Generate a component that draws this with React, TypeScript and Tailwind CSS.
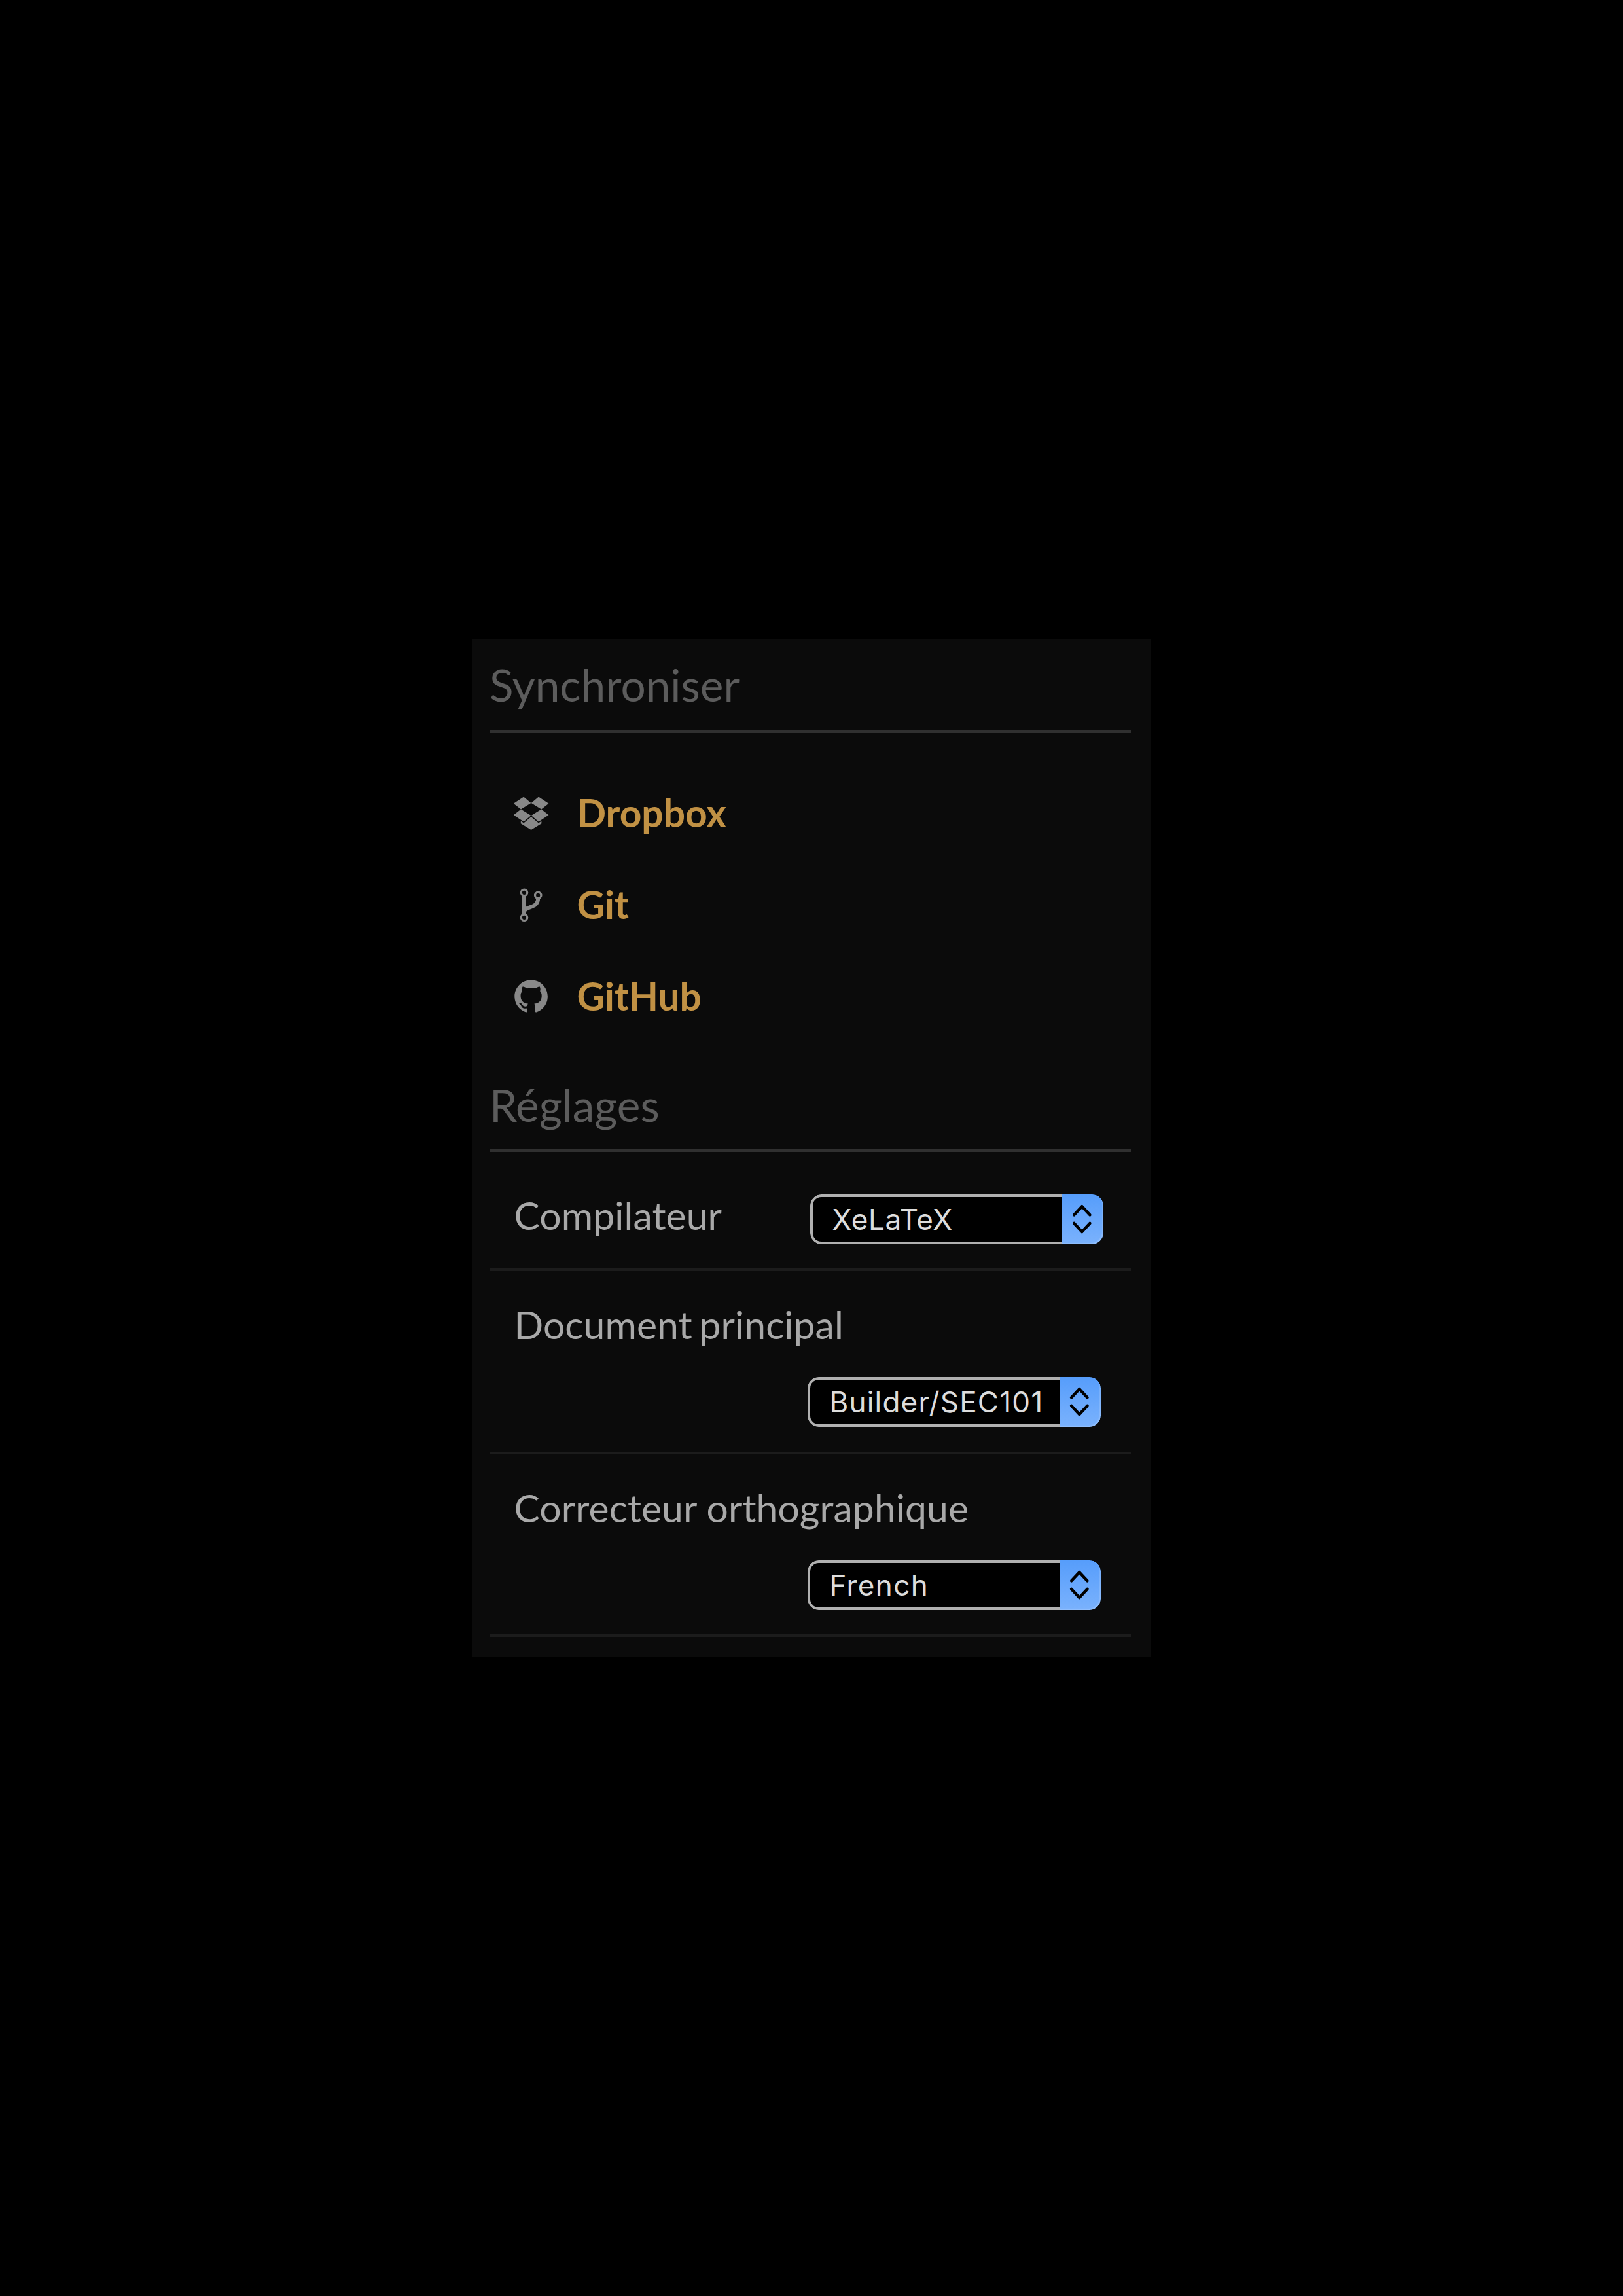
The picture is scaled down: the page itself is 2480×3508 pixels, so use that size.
import type { ReactNode } from "react";

function DropboxIcon() {
  return (
    <svg viewBox="0 0 72 66" className="h-[66px] w-[72px] fill-[#888888]">
      <path d="M8.8 17.8 24.2 7.6 35.4 16.9 20 26.5ZM62.4 17.8 47 7.6 35.8 16.9 51.2 26.5ZM8.8 35.3 20 26.5 35.4 36 24.2 45.4ZM62.4 35.3 51.2 26.5 35.8 36 47 45.4Z" />
      <path d="M35.6 38 24.3 47.4 19.8 44.6V48.2L35.6 58 51.4 48.2V44.6L46.9 47.4Z" />
    </svg>
  );
}

function BranchIcon() {
  return (
    <svg viewBox="0 0 72 66" fill="none" className="h-[66px] w-[72px] stroke-[#888888]">
      <circle cx="25" cy="13.8" r="4.7" strokeWidth="3.2" />
      <circle cx="46.2" cy="17.9" r="4.7" strokeWidth="3.2" />
      <circle cx="25" cy="51.8" r="4.7" strokeWidth="3.2" />
      <path d="M25 18.6V47M46.2 22.6C46.2 38 27.5 34.5 25.4 42" strokeWidth="6" />
    </svg>
  );
}

function GitHubIcon() {
  return (
    <svg viewBox="0 0 72 66" className="h-[66px] w-[72px] fill-[#888888]">
      <path
        transform="translate(10.3 7.2) scale(3.16)"
        d="M8 0C3.58 0 0 3.58 0 8c0 3.54 2.29 6.53 5.47 7.59.4.07.55-.17.55-.38 0-.19-.01-.82-.01-1.49-2.01.37-2.53-.49-2.69-.94-.09-.23-.48-.94-.82-1.13-.28-.15-.68-.52-.01-.53.63-.01 1.08.58 1.23.82.72 1.21 1.87.87 2.33.66.07-.52.28-.87.51-1.07-1.78-.2-3.64-.89-3.64-3.95 0-.87.31-1.59.82-2.15-.08-.2-.36-1.02.08-2.12 0 0 .67-.21 2.2.82.64-.18 1.32-.27 2-.27s1.36.09 2 .27c1.53-1.04 2.2-.82 2.2-.82.44 1.1.16 1.92.08 2.12.51.56.82 1.27.82 2.15 0 3.07-1.87 3.75-3.65 3.95.29.25.54.73.54 1.48 0 1.07-.01 1.93-.01 2.2 0 .21.15.46.55.38A8.01 8.01 0 0 0 16 8c0-4.42-3.58-8-8-8z"
      />
    </svg>
  );
}

function Heading({ children, className }: { children: ReactNode; className: string }) {
  return (
    <h2 className={`border-b-4 border-[#303030] text-[67.5px] leading-[80px] text-[#5c5c5c] ${className}`}>
      {children}
    </h2>
  );
}

function SyncLink({ icon, label }: { icon: ReactNode; label: string }) {
  return (
    <li className="flex h-[70px] items-end">
      {icon}
      <a className="-mb-px ml-[33.5px] text-[58.7px] leading-[71px] font-bold text-[#c19144]">{label}</a>
    </li>
  );
}

function Select({ value, className }: { value: string; className: string }) {
  return (
    <div className={`flex h-[76px] w-[448px] shrink-0 overflow-hidden rounded-[17px] bg-[#000000] ${className}`}>
      <div className="flex-1 rounded-l-[17px] border-y-4 border-l-4 border-[#b0b0b0] pl-[29.5px] font-['Inter',sans-serif] text-[44px] leading-[68px] whitespace-nowrap text-[#dddddd]">
        {value}
      </div>
      <div className="h-full w-[63px] rounded-r-[17px] bg-linear-to-b from-[#569dfb] to-[#7ab2fd] shadow-[inset_-2px_-2px_1px_rgba(255,255,255,0.16)]">
        <svg viewBox="0 0 63 76" fill="none" className="h-[76px] w-[63px] stroke-black">
          <path
            d="M18.2 31.2 30.3 18.2 42.4 31.2M18.2 44 30.3 57 42.4 44"
            strokeWidth="4.6"
            strokeLinecap="round"
            strokeLinejoin="round"
          />
        </svg>
      </div>
    </div>
  );
}

const labelClass = "-mb-px text-[58.8px] leading-[71px] tracking-[0.11px] text-[#a9a9a9]";

function StackedSetting({ label, className = "", children }: { label: string; className?: string; children: ReactNode }) {
  return (
    <div className="flex flex-col border-b-4 border-[#1c1c1c] pt-[46px] pb-[37.5px] pl-[37.5px]">
      <div className={`${labelClass} ${className}`}>{label}</div>
      {children}
    </div>
  );
}

export default function App() {
  return (
    <main className="flex h-[3508px] w-[2480px] items-center justify-center bg-black">
      <section className="h-[1556px] w-[1038px] bg-[#0b0b0b] pt-[30px] pr-[31px] pl-[27px] font-['Lato',sans-serif]">
        <Heading className="pb-[30px]">Synchroniser</Heading>
        <ul className="mt-[86px] ml-7 flex flex-col gap-[70px]">
          <SyncLink icon={<DropboxIcon />} label="Dropbox" />
          <SyncLink icon={<BranchIcon />} label="Git" />
          <SyncLink icon={<GitHubIcon />} label="GitHub" />
        </ul>
        <Heading className="mt-[92px] pb-7">Réglages</Heading>
        <div className="flex h-[182px] items-start justify-between border-b-4 border-[#1c1c1c] pt-[61px] pr-[42px] pl-[37.5px]">
          <div className={labelClass}>Compilateur</div>
          <Select value="XeLaTeX" className="mt-1 tracking-[0.55px]" />
        </div>
        <StackedSetting label="Document principal" className="[word-spacing:-4.5px]">
          <Select value="Builder/SEC101" className="mt-[46px] mr-[46px] self-end tracking-[1.2px]" />
        </StackedSetting>
        <StackedSetting label="Correcteur orthographique">
          <Select value="French" className="mt-[46px] mr-[46px] self-end tracking-[1.4px]" />
        </StackedSetting>
      </section>
    </main>
  );
}
